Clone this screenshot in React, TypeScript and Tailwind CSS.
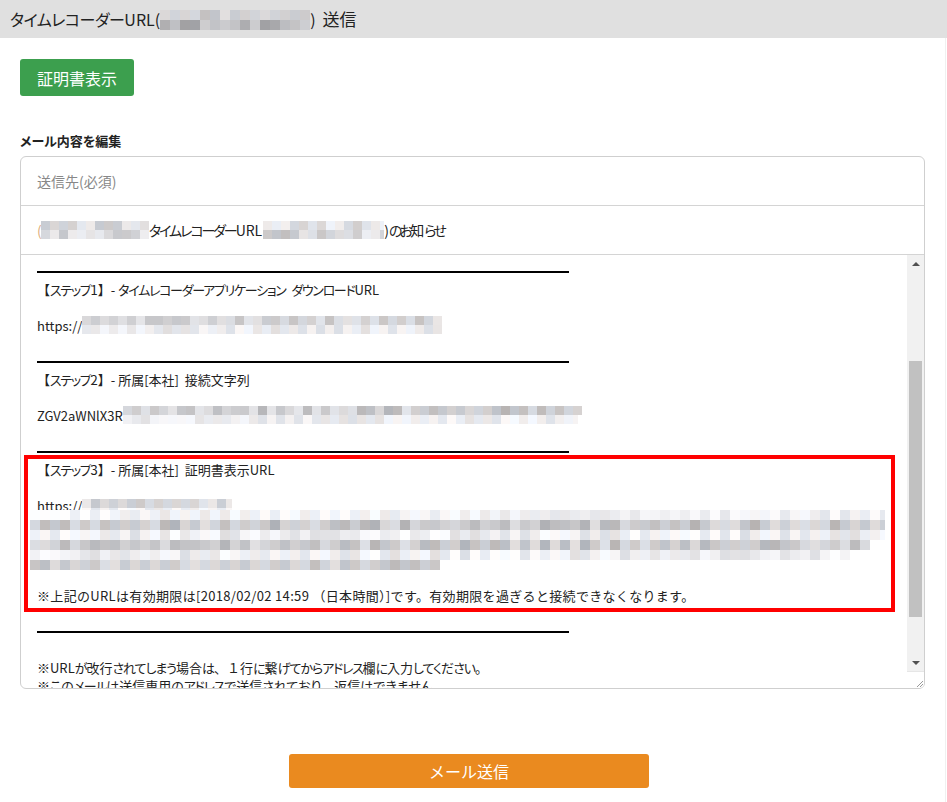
import React from "react";

type Row = { w: number; off?: number; lo: number; hi: number };

// deterministic gray shade for the blurred (mosaic) parts
const tone = (s: number, i: number, lo: number, hi: number) => {
  const x = Math.sin(s * 12.9898 + i * 78.233) * 43758.5453;
  const r = x - Math.floor(x);
  const v = Math.round(lo + r * (hi - lo));
  const t = Math.round(Math.sin(s * 1.7 + i * 3.1) * 4);
  return `rgb(${Math.min(255, v + t)},${v},${Math.min(255, v - t + 3)})`;
};

const Mosaic = ({ rows, cell = 9, rowH = 9, seed = 1, className = "" }: { rows: Row[]; cell?: number; rowH?: number; seed?: number; className?: string }) => (
  <span className={`flex flex-col shrink-0 ${className}`}>
    {rows.map((r, ri) => {
      const n = Math.ceil(r.w / cell);
      return (
        <span key={ri} className="flex" style={{ marginLeft: r.off ?? 0, height: rowH }}>
          {Array.from({ length: n }, (_, i) => (
            <span
              key={i}
              style={{ width: i === n - 1 ? r.w - cell * (n - 1) : cell, height: rowH, background: tone(seed * 31 + ri * 7, i, r.lo, r.hi) }}
            />
          ))}
        </span>
      );
    })}
  </span>
);

// kana in the original font is much narrower than kanji
const KANA_SPLIT = /([\u30A0-\u30FF]+|[\u3040-\u309F]+)/;
const KATA = "[font-feature-settings:'palt'] tracking-[-0.1em]";
const HIRA = "[font-feature-settings:'palt']";

const Jp = ({ t, k = KATA, h = HIRA, className = "" }: { t: string; k?: string; h?: string; className?: string }) => (
  <span className={className}>
    {t.split(KANA_SPLIT).map((s, i) =>
      /^[\u30A0-\u30FF]+$/.test(s) ? (
        <span key={i} className={k}>{s}</span>
      ) : /^[\u3040-\u309F]+$/.test(s) ? (
        <span key={i} className={h}>{s}</span>
      ) : (
        <React.Fragment key={i}>{s}</React.Fragment>
      )
    )}
  </span>
);

const Line = ({ children }: { children?: React.ReactNode }) => (
  <div className="h-[18px] leading-[18px] whitespace-pre flex items-start">{children}</div>
);

const Rule = () => (
  <div className="h-[18px] flex items-center">
    <div className="h-[2px] w-[532px] bg-black" />
  </div>
);

const Blank = () => <div className="h-[18px]" />;

const App = () => {
  return (
    <div className="w-[947px] h-[802px] bg-white text-[#222] font-['Noto_Sans_CJK_JP','Noto_Sans',sans-serif] overflow-hidden">
      {/* Title bar */}
      <header className="h-[38px] bg-[#e0e0e0] flex items-center pl-[10px] text-[16px] whitespace-pre">
        <Jp t="タイムレコーダーURL(" k="[font-feature-settings:'palt'] tracking-[-0.03em]" />
        <Mosaic seed={3} cell={10} rowH={10} className="mt-[1px]" rows={[{ w: 150, lo: 190, hi: 225 }, { w: 150, lo: 160, hi: 215 }]} />
        <span>)</span>
        <span className="ml-[7px] text-[17px]">送信</span>
      </header>

      <div className="px-[20px] border-r border-[#f0f0f0] w-[946px] h-[764px]">
        <button type="button" className="mt-[21px] h-[37px] w-[114px] rounded-[3px] bg-[#3c9f4e] text-white text-[16px]">
          証明書表示
        </button>

        <div className="mt-[36px] text-[13px] font-bold leading-[18px]">
          <Jp t="メール内容を編集" k="[font-feature-settings:'palt']" />
        </div>

        {/* Mail form */}
        <div className="mt-[6px] h-[533px] border border-[#cfcfcf] rounded-[6px] flex flex-col overflow-hidden">
          <div className="h-[49px] shrink-0 border-b border-[#d4d4d4] flex items-center pl-[16px] text-[14px] text-[#888]">
            送信先(必須)
          </div>
          <div className="h-[49px] shrink-0 border-b border-[#d4d4d4] flex items-center pl-[16px] text-[14px] whitespace-pre">
            <span className="text-[#e0b080] w-[4px] overflow-hidden">(</span>
            <Mosaic seed={7} rows={[{ w: 108, lo: 200, hi: 235 }, { w: 108, lo: 195, hi: 240 }]} />
            <Jp t="タイムレコーダーURL" k="[font-feature-settings:'palt'] tracking-[-0.15em]" />
            <Mosaic seed={11} className="ml-[1px]" rows={[{ w: 121, lo: 205, hi: 245 }, { w: 121, lo: 190, hi: 240 }]} />
            <Jp t=")のお知らせ" h="[font-feature-settings:'palt'] tracking-[-0.2em]" />
          </div>

          {/* Body textarea */}
          <div className="flex-1 flex relative min-h-0">
            <div className="flex-1 overflow-hidden pt-[8px] pl-[16px] text-[13px]">
              <Rule />
              <Line><Jp t="【ステップ1】- タイムレコーダーアプリケーション  ダウンロードURL" /></Line>
              <Blank />
              <Line>
                <span>https://</span>
                <Mosaic seed={13} className="-mt-[1px]" rows={[{ w: 360, lo: 195, hi: 230 }, { w: 360, lo: 222, hi: 248 }]} />
              </Line>
              <Blank />
              <Rule />
              <Line><Jp t="【ステップ2】- 所属[本社]  接続文字列" /></Line>
              <Blank />
              <Line>
                <span>ZGV2aWNlX3R</span>
                <Mosaic seed={17} className="-mt-[1px]" rows={[{ w: 459, lo: 180, hi: 230 }, { w: 455, lo: 222, hi: 250 }]} />
              </Line>
              <Blank />
              <Rule />
              <Line><Jp t="【ステップ3】- 所属[本社]  証明書表示URL" /></Line>
              <Blank />
              <Line>
                <span>https://</span>
                <Mosaic seed={19} className="mt-[2px]" rows={[{ w: 150, lo: 195, hi: 232 }, { w: 150, lo: 230, hi: 252 }]} />
              </Line>
              <div className="h-[54px] -ml-[7px] flex items-start">
                <Mosaic
                  seed={23}
                  cell={10}
                  rowH={10}
                  className="-mt-[5px]"
                  rows={[
                    { w: 855, lo: 230, hi: 255 },
                    { w: 855, lo: 175, hi: 225 },
                    { w: 855, lo: 222, hi: 255 },
                    { w: 840, lo: 180, hi: 225 },
                    { w: 820, lo: 222, hi: 255 },
                    { w: 410, lo: 185, hi: 225 },
                  ]}
                />
              </div>
              <Blank />
              <Line>
                <Jp className="tracking-[0.025em]" t="※上記のURLは有効期限は[2018/02/02 14:59 （日本時間）]です。有効期限を過ぎると接続できなくなります。" h="" />
              </Line>
              <Blank />
              <Rule />
              <Blank />
              <Line><Jp t="※URLが改行されてしまう場合は、１行に繋げてからアドレス欄に入力してください。" h="[font-feature-settings:'palt'] tracking-[-0.08em]" /></Line>
              <Line><Jp t="※このメールは送信専用のアドレスで送信されており、返信はできません。" /></Line>
            </div>

            {/* Scrollbar */}
            <div className="w-[17px] shrink-0 flex flex-col bg-[#f1f1f1]">
              <div className="h-[17px] flex items-center justify-center">
                <div className="w-0 h-0 border-x-[4px] border-x-transparent border-b-[4px] border-b-[#505050]" />
              </div>
              <div className="flex-1 pt-[89px]">
                <div className="mx-[2px] h-[256px] bg-[#c1c1c1]" />
              </div>
              <div className="h-[17px] flex items-center justify-center">
                <div className="w-0 h-0 border-x-[4px] border-x-transparent border-t-[4px] border-t-[#505050]" />
              </div>
              <div className="h-[17px] bg-white border-t border-[#e6e6e6] flex items-end justify-end">
                <svg width="10" height="10" viewBox="0 0 10 10">
                  <path d="M9 3 L3 9 M9 6 L6 9" stroke="#9a9a9a" strokeWidth="1" fill="none" />
                </svg>
              </div>
            </div>

            {/* highlight annotation */}
            <div className="absolute left-[3px] top-[200px] w-[871px] h-[157px] border-[4px] border-[#ff0000] pointer-events-none" />
          </div>
        </div>

        <button type="button" className="mt-[65px] ml-[269px] h-[34px] w-[360px] rounded-[3px] bg-[#ea8a1f] text-white text-[16px]">
          メール送信
        </button>
      </div>
    </div>
  );
};

export default App;
